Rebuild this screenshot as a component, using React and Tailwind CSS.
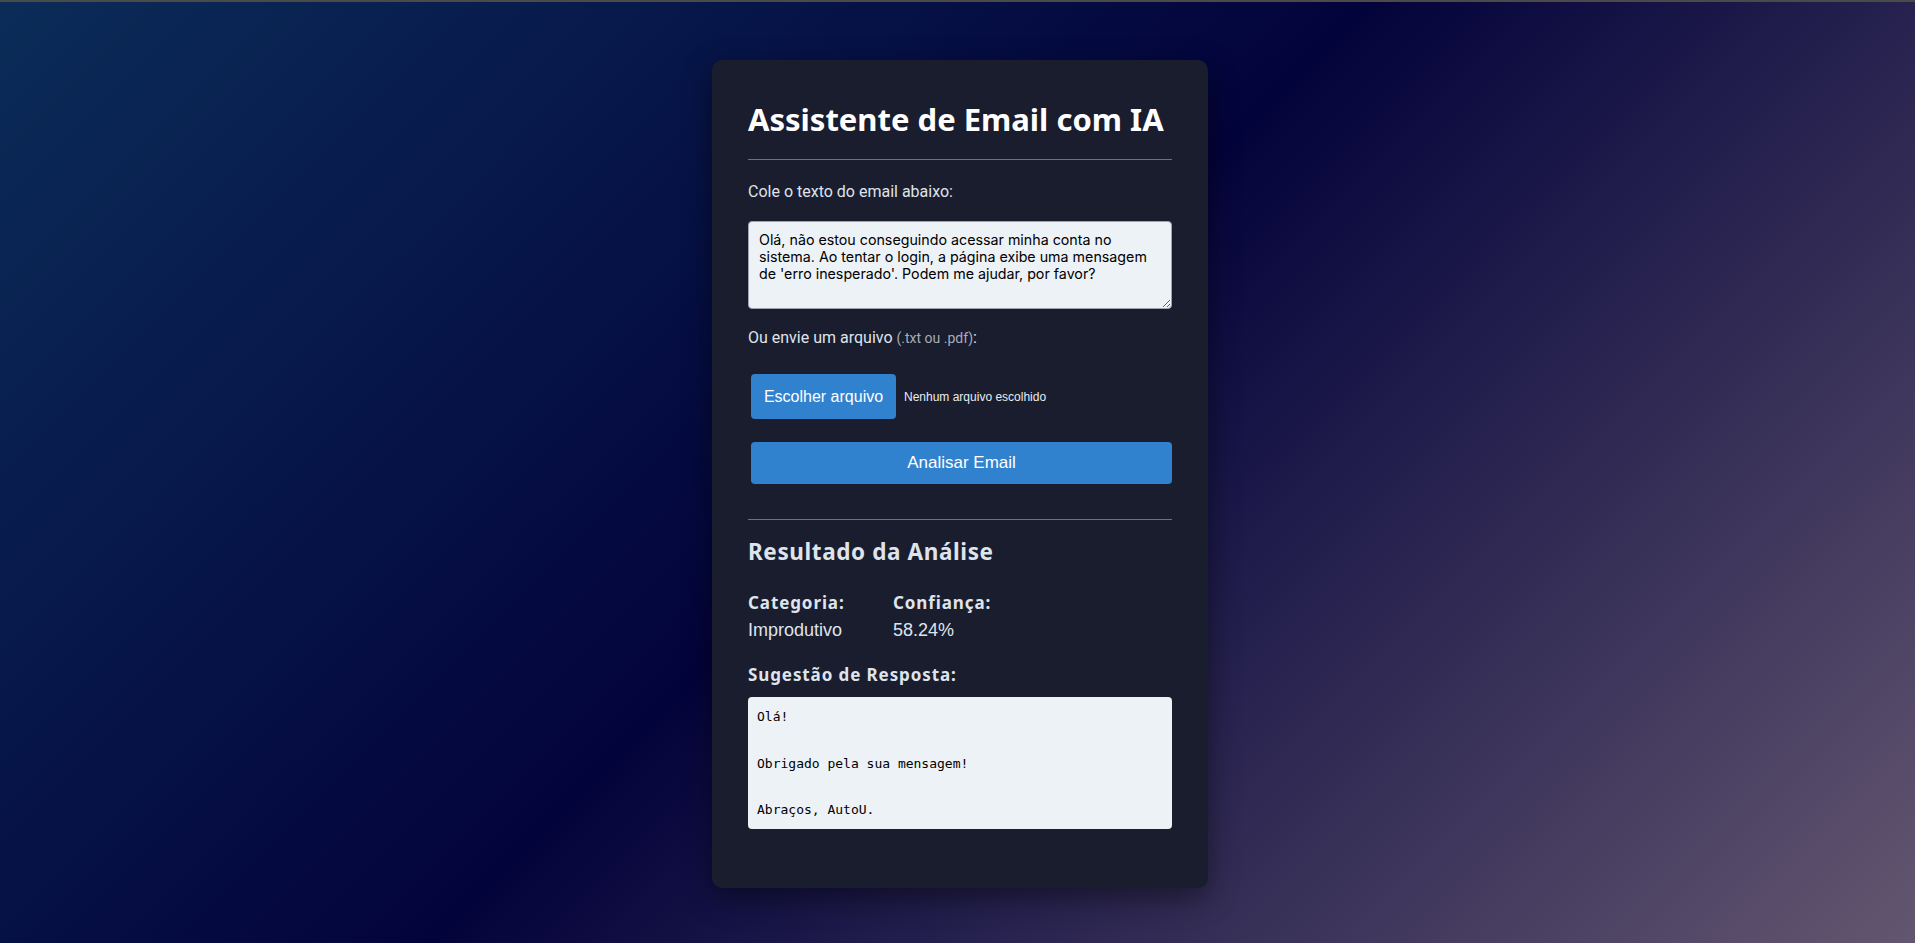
import { useState } from "react";

const heading = { fontFamily: "'Noto Sans', Inter, sans-serif" };

export default function App() {
  const [email, setEmail] = useState(
    "Olá, não estou conseguindo acessar minha conta no sistema. Ao tentar o login, a página exibe uma mensagem de 'erro inesperado'. Podem me ajudar, por favor?"
  );

  return (
    <div className="min-h-[943px] w-full flex flex-col bg-[linear-gradient(135deg,#0b2c58_0%,#03033b_48%,#635670_100%)]">
      <div className="h-[2px] bg-[#4a4a4a]" />
      <div className="flex justify-center pl-[5px] pt-[58px] pb-[51px]">
        <div className="w-[496px] rounded-[10px] bg-[#1a1d2e] px-[36px] pt-[40px] pb-[59px] shadow-[0_10px_30px_rgba(0,0,0,0.45)]">
          <h1
            className="text-[31px] leading-[38px] font-bold text-white whitespace-nowrap pb-[21px] border-b border-[#3182ce]"
            style={heading}
          >
            Assistente de Email com IA
          </h1>

          <label className="block mt-[20px] text-[16px] leading-[24px] text-[#dfe4ec] font-['Roboto',sans-serif]">
            Cole o texto do email abaixo:
          </label>
          <textarea
            value={email}
            onChange={(e) => setEmail(e.target.value)}
            className="mt-[17px] block w-full h-[88px] rounded-[4px] border border-[#9aa3b0] bg-[#edf2f7] px-[10px] py-[9px] text-[14.25px] leading-[17px] text-black font-['Inter',sans-serif] resize-y outline-none"
          />

          <p className="mt-[17px] text-[16px] leading-[24px] text-[#dfe4ec] font-['Roboto',sans-serif]">
            Ou envie um arquivo <span className="text-[14px] text-[#a7adb8]">(.txt ou .pdf)</span>:
          </p>

          <div className="mt-[24px] ml-[3px] flex items-center gap-[8px]">
            <button className="h-[45px] w-[145px] rounded-[4px] bg-[#3182ce] text-white text-[16px] font-['Liberation_Sans',Arial,sans-serif]">
              Escolher arquivo
            </button>
            <span className="text-[12px] text-[#e8ecf2] font-['Liberation_Sans',Arial,sans-serif]">
              Nenhum arquivo escolhido
            </span>
          </div>

          <button className="mt-[23px] ml-[3px] block h-[42px] w-[421px] rounded-[4px] bg-[#3182ce] text-white text-[17px] font-['Liberation_Sans',Arial,sans-serif]">
            Analisar Email
          </button>

          <div className="mt-[35px] border-t border-[#3182ce]" />

          <h2
            className="mt-[17px] text-[22.5px] leading-[30px] font-bold text-[#dfe4ec] tracking-[0.6px]"
            style={heading}
          >
            Resultado da Análise
          </h2>

          <div className="mt-[24px] flex">
            <div className="w-[145px]">
              <div className="text-[17px] leading-[24px] font-bold text-[#dfe4ec] tracking-[0.9px]" style={heading}>
                Categoria:
              </div>
              <div className="mt-[3px] text-[18px] leading-[24px] text-[#dfe4ec] font-['Liberation_Sans',Arial,sans-serif]">
                Improdutivo
              </div>
            </div>
            <div>
              <div className="text-[17px] leading-[24px] font-bold text-[#dfe4ec] tracking-[0.9px]" style={heading}>
                Confiança:
              </div>
              <div className="mt-[3px] text-[18px] leading-[24px] text-[#dfe4ec] font-['Liberation_Sans',Arial,sans-serif]">
                58.24%
              </div>
            </div>
          </div>

          <h3
            className="mt-[21px] text-[17px] leading-[24px] font-bold text-[#dfe4ec] tracking-[0.9px]"
            style={heading}
          >
            Sugestão de Resposta:
          </h3>

          <pre className="mt-[10px] rounded-[4px] bg-[#edf2f7] px-[9px] py-[8px] text-[13px] leading-[23.3px] text-black whitespace-pre-wrap font-['DejaVu_Sans_Mono',monospace]">
            {"Olá!\n\nObrigado pela sua mensagem!\n\nAbraços, AutoU."}
          </pre>
        </div>
      </div>
    </div>
  );
}
